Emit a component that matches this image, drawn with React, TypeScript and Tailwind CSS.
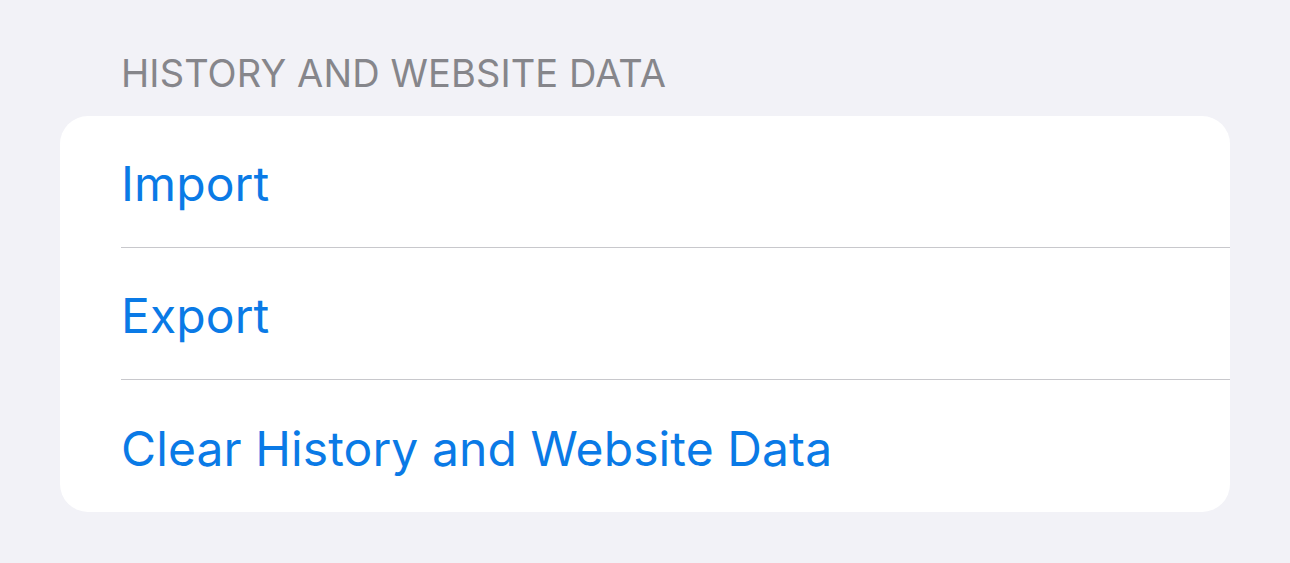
const rows = ["Import", "Export", "Clear History and Website Data"];

export default function App() {
  return (
    <div
      className="min-h-screen w-full bg-[#f2f2f7] px-[60px] pt-[50px]"
      style={{ fontFamily: "Inter, 'Noto Sans', sans-serif" }}
    >
      {/* Section header */}
      <div className="pl-[61px] text-[38px] leading-[46px] tracking-[0.1px] text-[#86868b]">
        HISTORY AND WEBSITE DATA
      </div>

      {/* Grouped list */}
      <div className="mt-[20px] w-[1170px] overflow-hidden rounded-[28px] bg-white">
        {rows.map((label, i) => (
          <div key={label} className="pl-[61px]">
            <div
              className={
                "flex h-[132px] items-center pt-[5px] text-[48px] tracking-[0.1px] text-[#0a7ae6] " +
                (i < rows.length - 1 ? "border-b border-[#c8c8cc]" : "")
              }
            >
              {label}
            </div>
          </div>
        ))}
      </div>
    </div>
  );
}
